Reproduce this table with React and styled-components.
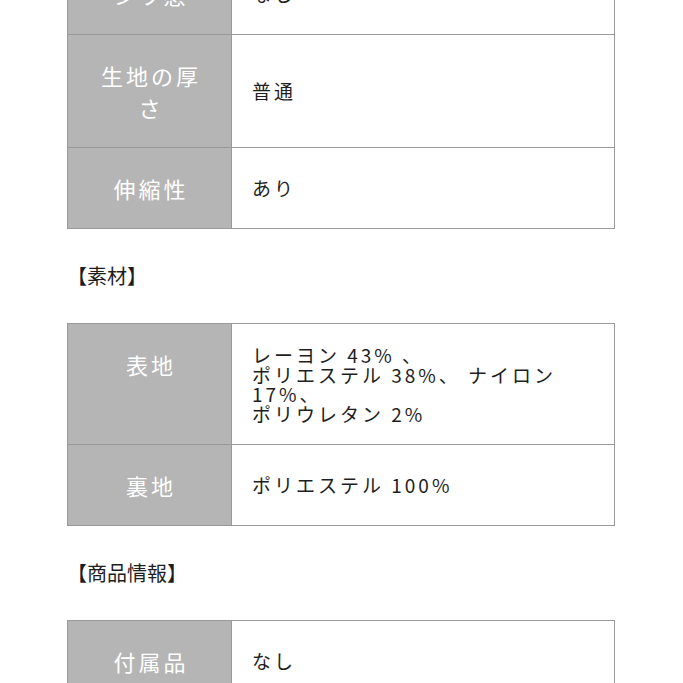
import React from 'react';
import styled, { createGlobalStyle } from 'styled-components';

const GlobalStyle = createGlobalStyle`
  html, body {
    margin: 0;
    padding: 0;
    background: #ffffff;
    overflow: hidden;
  }
  body {
    font-family: 'Noto Sans CJK JP', 'Noto Sans', sans-serif;
    color: #222222;
  }
`;

const sections = [
  {
    rows: [
      { label: 'シワ感', value: ['なし'] },
      { label: '生地の厚さ', value: ['普通'] },
      { label: '伸縮性', value: ['あり'] },
    ],
  },
  {
    title: '【素材】',
    rows: [
      {
        label: '表地',
        value: ['レーヨン 43% 、', 'ポリエステル 38%、 ナイロン', '17%、', 'ポリウレタン 2%'],
      },
      { label: '裏地', value: ['ポリエステル 100%'] },
    ],
  },
  {
    title: '【商品情報】',
    rows: [
      { label: '付属品', value: ['なし'] },
      { label: '原産国', value: ['中国'] },
    ],
  },
];

function App() {
  return (
    <>
      <GlobalStyle />
      <Page>
        {sections.map((section, i) => (
          <Section key={i}>
            {section.title && <Heading>{section.title}</Heading>}
            <Table>
              {section.rows.map((row) => (
                <Row key={row.label}>
                  <Label>{row.label}</Label>
                  <Value $multi={row.value.length > 1}>
                    {row.value.map((line, j) => (
                      <React.Fragment key={j}>
                        {j > 0 && <br />}
                        {line}
                      </React.Fragment>
                    ))}
                  </Value>
                </Row>
              ))}
            </Table>
          </Section>
        ))}
      </Page>
    </>
  );
}

const Page = styled.div`
  width: 548px;
  margin: -47px 0 0 67px;
  display: flex;
  flex-direction: column;
`;
const Section = styled.section`
  display: flex;
  flex-direction: column;
`;
const Heading = styled.h3`
  margin: 33px 0 33px 0;
  font-size: 20px;
  font-weight: 400;
  line-height: 28px;
  color: #1e1e1e;
`;
const Table = styled.div`
  border: 1px solid #999999;
  border-bottom: none;
`;
const Row = styled.div`
  display: grid;
  grid-template-columns: 164px 1fr;
  border-bottom: 1px solid #999999;
`;
const Label = styled.div`
  background: #b5b5b5;
  border-right: 1px solid #999999;
  color: #ffffff;
  font-size: 22px;
  letter-spacing: 3px;
  line-height: 32px;
  text-align: center;
  padding: 24px 22px 24px 25px;
`;
const Value = styled.div`
  display: block;
  align-self: center;
  padding: ${(p) => (p.$multi ? '21px' : '0')} 20px;
  font-size: 19px;
  letter-spacing: 3px;
  line-height: ${(p) => (p.$multi ? '19.5px' : '28px')};
  color: #1e1e1e;
`;

export default App;
